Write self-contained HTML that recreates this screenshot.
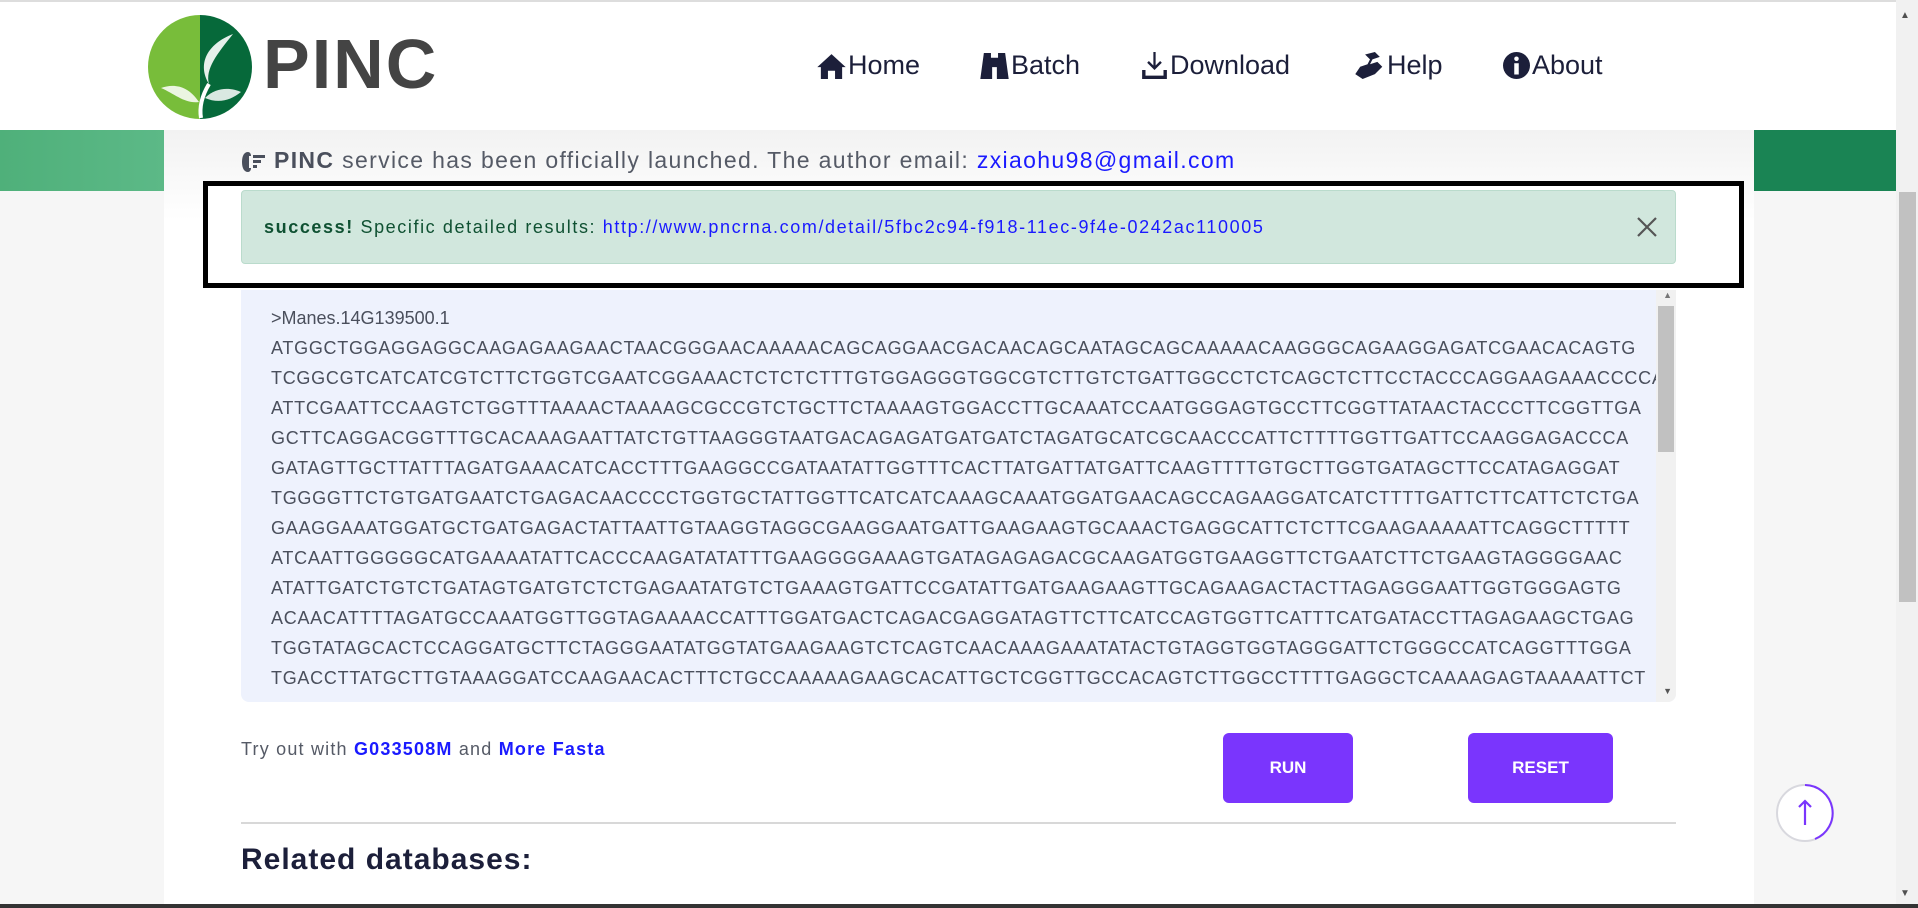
<!DOCTYPE html>
<html><head><meta charset="utf-8">
<style>
*{margin:0;padding:0;box-sizing:border-box}
body{width:1918px;height:908px;overflow:hidden;background:#fff;font-family:"Liberation Sans",sans-serif;position:relative}
.abs{position:absolute}
.nav{position:absolute;top:50px;font-size:27px;color:#1c1f3a;white-space:nowrap;display:flex;align-items:center}
.nav svg{margin-right:2px}
.seq{position:absolute;left:30px;font-size:18px;color:#4a4f5c;letter-spacing:0.72px;white-space:nowrap}
</style></head><body>
<div class="abs" style="left:0;top:0;width:1918px;height:2px;background:#ddd"></div>
<!-- logo -->
<svg class="abs" style="left:147px;top:14px" width="106" height="106" viewBox="0 0 106 106">
<defs><clipPath id="l"><rect x="0" y="0" width="53" height="106"/></clipPath><clipPath id="r"><rect x="53" y="0" width="53" height="106"/></clipPath></defs>
<ellipse cx="53" cy="53" rx="52" ry="52" fill="#78bd3a" clip-path="url(#l)"/>
<ellipse cx="53" cy="53" rx="52" ry="52" fill="#06693a" clip-path="url(#r)"/>
<path d="M86 20 C60 30 50 50 62 70 C58 55 70 40 86 20Z" fill="#fff" opacity=".9"/>
<path d="M62 70 C56 80 52 92 54 104" stroke="#fff" stroke-width="4" fill="none"/>
<path d="M52 88 C40 70 25 70 14 74 C28 80 38 90 52 88Z" fill="#fff" opacity=".85"/>
<path d="M58 84 C70 72 85 74 94 78 C84 86 72 90 58 84Z" fill="#fff" opacity=".85"/>
</svg>
<div class="abs" style="left:263px;top:24px;font-size:70px;font-weight:bold;color:#444;letter-spacing:2px">PINC</div>
<!-- nav -->
<div class="nav" style="left:817px"><svg width="29" height="26" viewBox="0 0 24 22"><path d="M12 1 L0 12 H3 V22 H9 V15 H15 V22 H21 V12 H24Z" fill="#1c1f3a"/></svg>Home</div>
<div class="nav" style="left:980px"><svg width="29" height="26" viewBox="0 0 24 22"><path d="M3 0H9V4H15V0H21L24 22H14V12H10V22H0Z" fill="#1c1f3a"/></svg>Batch</div>
<div class="nav" style="left:1141px"><svg width="27" height="27" viewBox="0 0 24 24"><path d="M11 0H13V12L17 8L18.5 9.5L12 16L5.5 9.5L7 8L11 12Z M1 16H4V21H20V16H23V24H1Z" fill="#1c1f3a"/></svg>Download</div>
<div class="nav" style="left:1355px"><svg width="30" height="27" viewBox="0 0 24 22"><path d="M8 2L16 0L20 4L14 6L12 10L18 8L22 12L16 18L6 22L0 18L4 12L10 10L12 6Z" fill="#1c1f3a"/></svg>Help</div>
<div class="nav" style="left:1503px"><svg width="27" height="27" viewBox="0 0 24 24"><circle cx="12" cy="12" r="12" fill="#1c1f3a"/><circle cx="12" cy="6" r="2" fill="#fff"/><rect x="10" y="10" width="4" height="10" fill="#fff"/></svg>About</div>
<!-- backgrounds -->
<div class="abs" style="left:0;top:130px;width:1896px;height:778px;background:#f6f6f6"></div>
<div class="abs" style="left:0;top:130px;width:164px;height:61px;background:linear-gradient(90deg,#4fb07a,#5cb987)"></div>
<div class="abs" style="left:1754px;top:130px;width:142px;height:61px;background:#1a8454"></div>
<div class="abs" style="left:164px;top:130px;width:1590px;height:778px;background:linear-gradient(#f2f2f2,#fff 90px)"></div>
<!-- page scrollbar -->
<div class="abs" style="left:1896px;top:0;width:22px;height:908px;background:#f1f1f1"></div>
<div class="abs" style="left:1899px;top:192px;width:17px;height:410px;background:#c1c1c1"></div>
<div class="abs" style="left:1900px;top:10px;font-size:10px;color:#505050">▲</div>
<div class="abs" style="left:1900px;top:888px;font-size:10px;color:#505050">▼</div>
<!-- notice -->
<svg class="abs" style="left:242px;top:152px" width="24" height="20" viewBox="0 0 24 20"><path d="M6 0C2 0 0 4 0 10C0 16 2 20 6 20C8 20 9 18 9 16H7V4H9C9 2 8 0 6 0Z M11 3H23V6H11Z M11 8H19V11H11Z M11 13H15V16H11Z" fill="#4a4f5c"/></svg>
<div class="abs" style="left:274px;top:147px;font-size:23px;color:#555a66;white-space:nowrap;letter-spacing:1.35px"><b style="color:#4a4f5c">PINC</b> service has been officially launched. The author email: <span style="color:#1a1aff">zxiaohu98@gmail.com</span></div>
<!-- black box -->
<div class="abs" style="left:203px;top:181px;width:1541px;height:107px;border:5px solid #000;background:#fff"></div>
<div class="abs" style="left:241px;top:190px;width:1435px;height:74px;background:#d1e7dd;border:1px solid #badbcc;border-radius:4px"></div>
<div class="abs" style="left:264px;top:217px;font-size:18px;color:#0f5132;white-space:nowrap;letter-spacing:1.6px"><b>success!</b> Specific detailed results: <span style="color:#1a1aff">http://www.pncrna.com/detail/5fbc2c94-f918-11ec-9f4e-0242ac110005</span></div>
<svg class="abs" style="left:1636px;top:216px" width="22" height="22" viewBox="0 0 22 22"><path d="M2 2L20 20M20 2L2 20" stroke="#555" stroke-width="2.2"/></svg>
<!-- textarea -->
<div class="abs" style="left:241px;top:290px;width:1435px;height:412px;background:#eef2fd;border-radius:0 0 8px 8px;overflow:hidden">
<div class="seq" style="top:18px;letter-spacing:0">&gt;Manes.14G139500.1</div>
<div class="seq" style="top:48px">ATGGCTGGAGGAGGCAAGAGAAGAACTAACGGGAACAAAAACAGCAGGAACGACAACAGCAATAGCAGCAAAAACAAGGGCAGAAGGAGATCGAACACAGTG</div>
<div class="seq" style="top:78px">TCGGCGTCATCATCGTCTTCTGGTCGAATCGGAAACTCTCTCTTTGTGGAGGGTGGCGTCTTGTCTGATTGGCCTCTCAGCTCTTCCTACCCAGGAAGAAACCCCA</div>
<div class="seq" style="top:108px">ATTCGAATTCCAAGTCTGGTTTAAAACTAAAAGCGCCGTCTGCTTCTAAAAGTGGACCTTGCAAATCCAATGGGAGTGCCTTCGGTTATAACTACCCTTCGGTTGA</div>
<div class="seq" style="top:138px">GCTTCAGGACGGTTTGCACAAAGAATTATCTGTTAAGGGTAATGACAGAGATGATGATCTAGATGCATCGCAACCCATTCTTTTGGTTGATTCCAAGGAGACCCA</div>
<div class="seq" style="top:168px">GATAGTTGCTTATTTAGATGAAACATCACCTTTGAAGGCCGATAATATTGGTTTCACTTATGATTATGATTCAAGTTTTGTGCTTGGTGATAGCTTCCATAGAGGAT</div>
<div class="seq" style="top:198px">TGGGGTTCTGTGATGAATCTGAGACAACCCCTGGTGCTATTGGTTCATCATCAAAGCAAATGGATGAACAGCCAGAAGGATCATCTTTTGATTCTTCATTCTCTGA</div>
<div class="seq" style="top:228px">GAAGGAAATGGATGCTGATGAGACTATTAATTGTAAGGTAGGCGAAGGAATGATTGAAGAAGTGCAAACTGAGGCATTCTCTTCGAAGAAAAATTCAGGCTTTTT</div>
<div class="seq" style="top:258px">ATCAATTGGGGGCATGAAAATATTCACCCAAGATATATTTGAAGGGGAAAGTGATAGAGAGACGCAAGATGGTGAAGGTTCTGAATCTTCTGAAGTAGGGGAAC</div>
<div class="seq" style="top:288px">ATATTGATCTGTCTGATAGTGATGTCTCTGAGAATATGTCTGAAAGTGATTCCGATATTGATGAAGAAGTTGCAGAAGACTACTTAGAGGGAATTGGTGGGAGTG</div>
<div class="seq" style="top:318px">ACAACATTTTAGATGCCAAATGGTTGGTAGAAAACCATTTGGATGACTCAGACGAGGATAGTTCTTCATCCAGTGGTTCATTTCATGATACCTTAGAGAAGCTGAG</div>
<div class="seq" style="top:348px">TGGTATAGCACTCCAGGATGCTTCTAGGGAATATGGTATGAAGAAGTCTCAGTCAACAAAGAAATATACTGTAGGTGGTAGGGATTCTGGGCCATCAGGTTTGGA</div>
<div class="seq" style="top:378px">TGACCTTATGCTTGTAAAGGATCCAAGAACACTTTCTGCCAAAAAGAAGCACATTGCTCGGTTGCCACAGTCTTGGCCTTTTGAGGCTCAAAAGAGTAAAAATTCT</div>
<div class="abs" style="right:0;top:0;width:20px;height:412px;background:#f1f1f1"></div>
<div class="abs" style="right:2px;top:16px;width:16px;height:146px;background:#c1c1c1"></div>
<div class="abs" style="right:4px;top:0;font-size:9px;color:#777">▲</div>
<div class="abs" style="right:4px;top:396px;font-size:9px;color:#555">▼</div>
</div>
<!-- try -->
<div class="abs" style="left:241px;top:739px;font-size:18px;color:#555a66;white-space:nowrap;letter-spacing:1.2px">Try out with <b style="color:#1a1aff">G033508M</b> and <b style="color:#1a1aff">More Fasta</b></div>
<div class="abs" style="left:1223px;top:733px;width:130px;height:70px;background:#7a35fd;border-radius:6px;color:#fff;font-size:17px;font-weight:bold;display:flex;align-items:center;justify-content:center">RUN</div>
<div class="abs" style="left:1468px;top:733px;width:145px;height:70px;background:#7a35fd;border-radius:6px;color:#fff;font-size:17px;font-weight:bold;display:flex;align-items:center;justify-content:center">RESET</div>
<div class="abs" style="left:241px;top:822px;width:1435px;height:2px;background:#d8d8d8"></div>
<div class="abs" style="left:241px;top:843px;font-size:30px;font-weight:bold;color:#1c1f3a;letter-spacing:1px">Related databases:</div>
<!-- to top -->
<svg class="abs" style="left:1775px;top:783px" width="60" height="60" viewBox="0 0 60 60"><circle cx="30" cy="30" r="28" fill="#fff" stroke="#d8d8de" stroke-width="2"/><path d="M30 2A28 28 0 0 1 40 56" fill="none" stroke="#7a35fd" stroke-width="2"/><path d="M30 42V18M24 24L30 18L36 24" stroke="#7a35fd" stroke-width="2.2" fill="none"/></svg>
<div class="abs" style="left:0;top:904px;width:1918px;height:4px;background:#333"></div>
</body></html>
